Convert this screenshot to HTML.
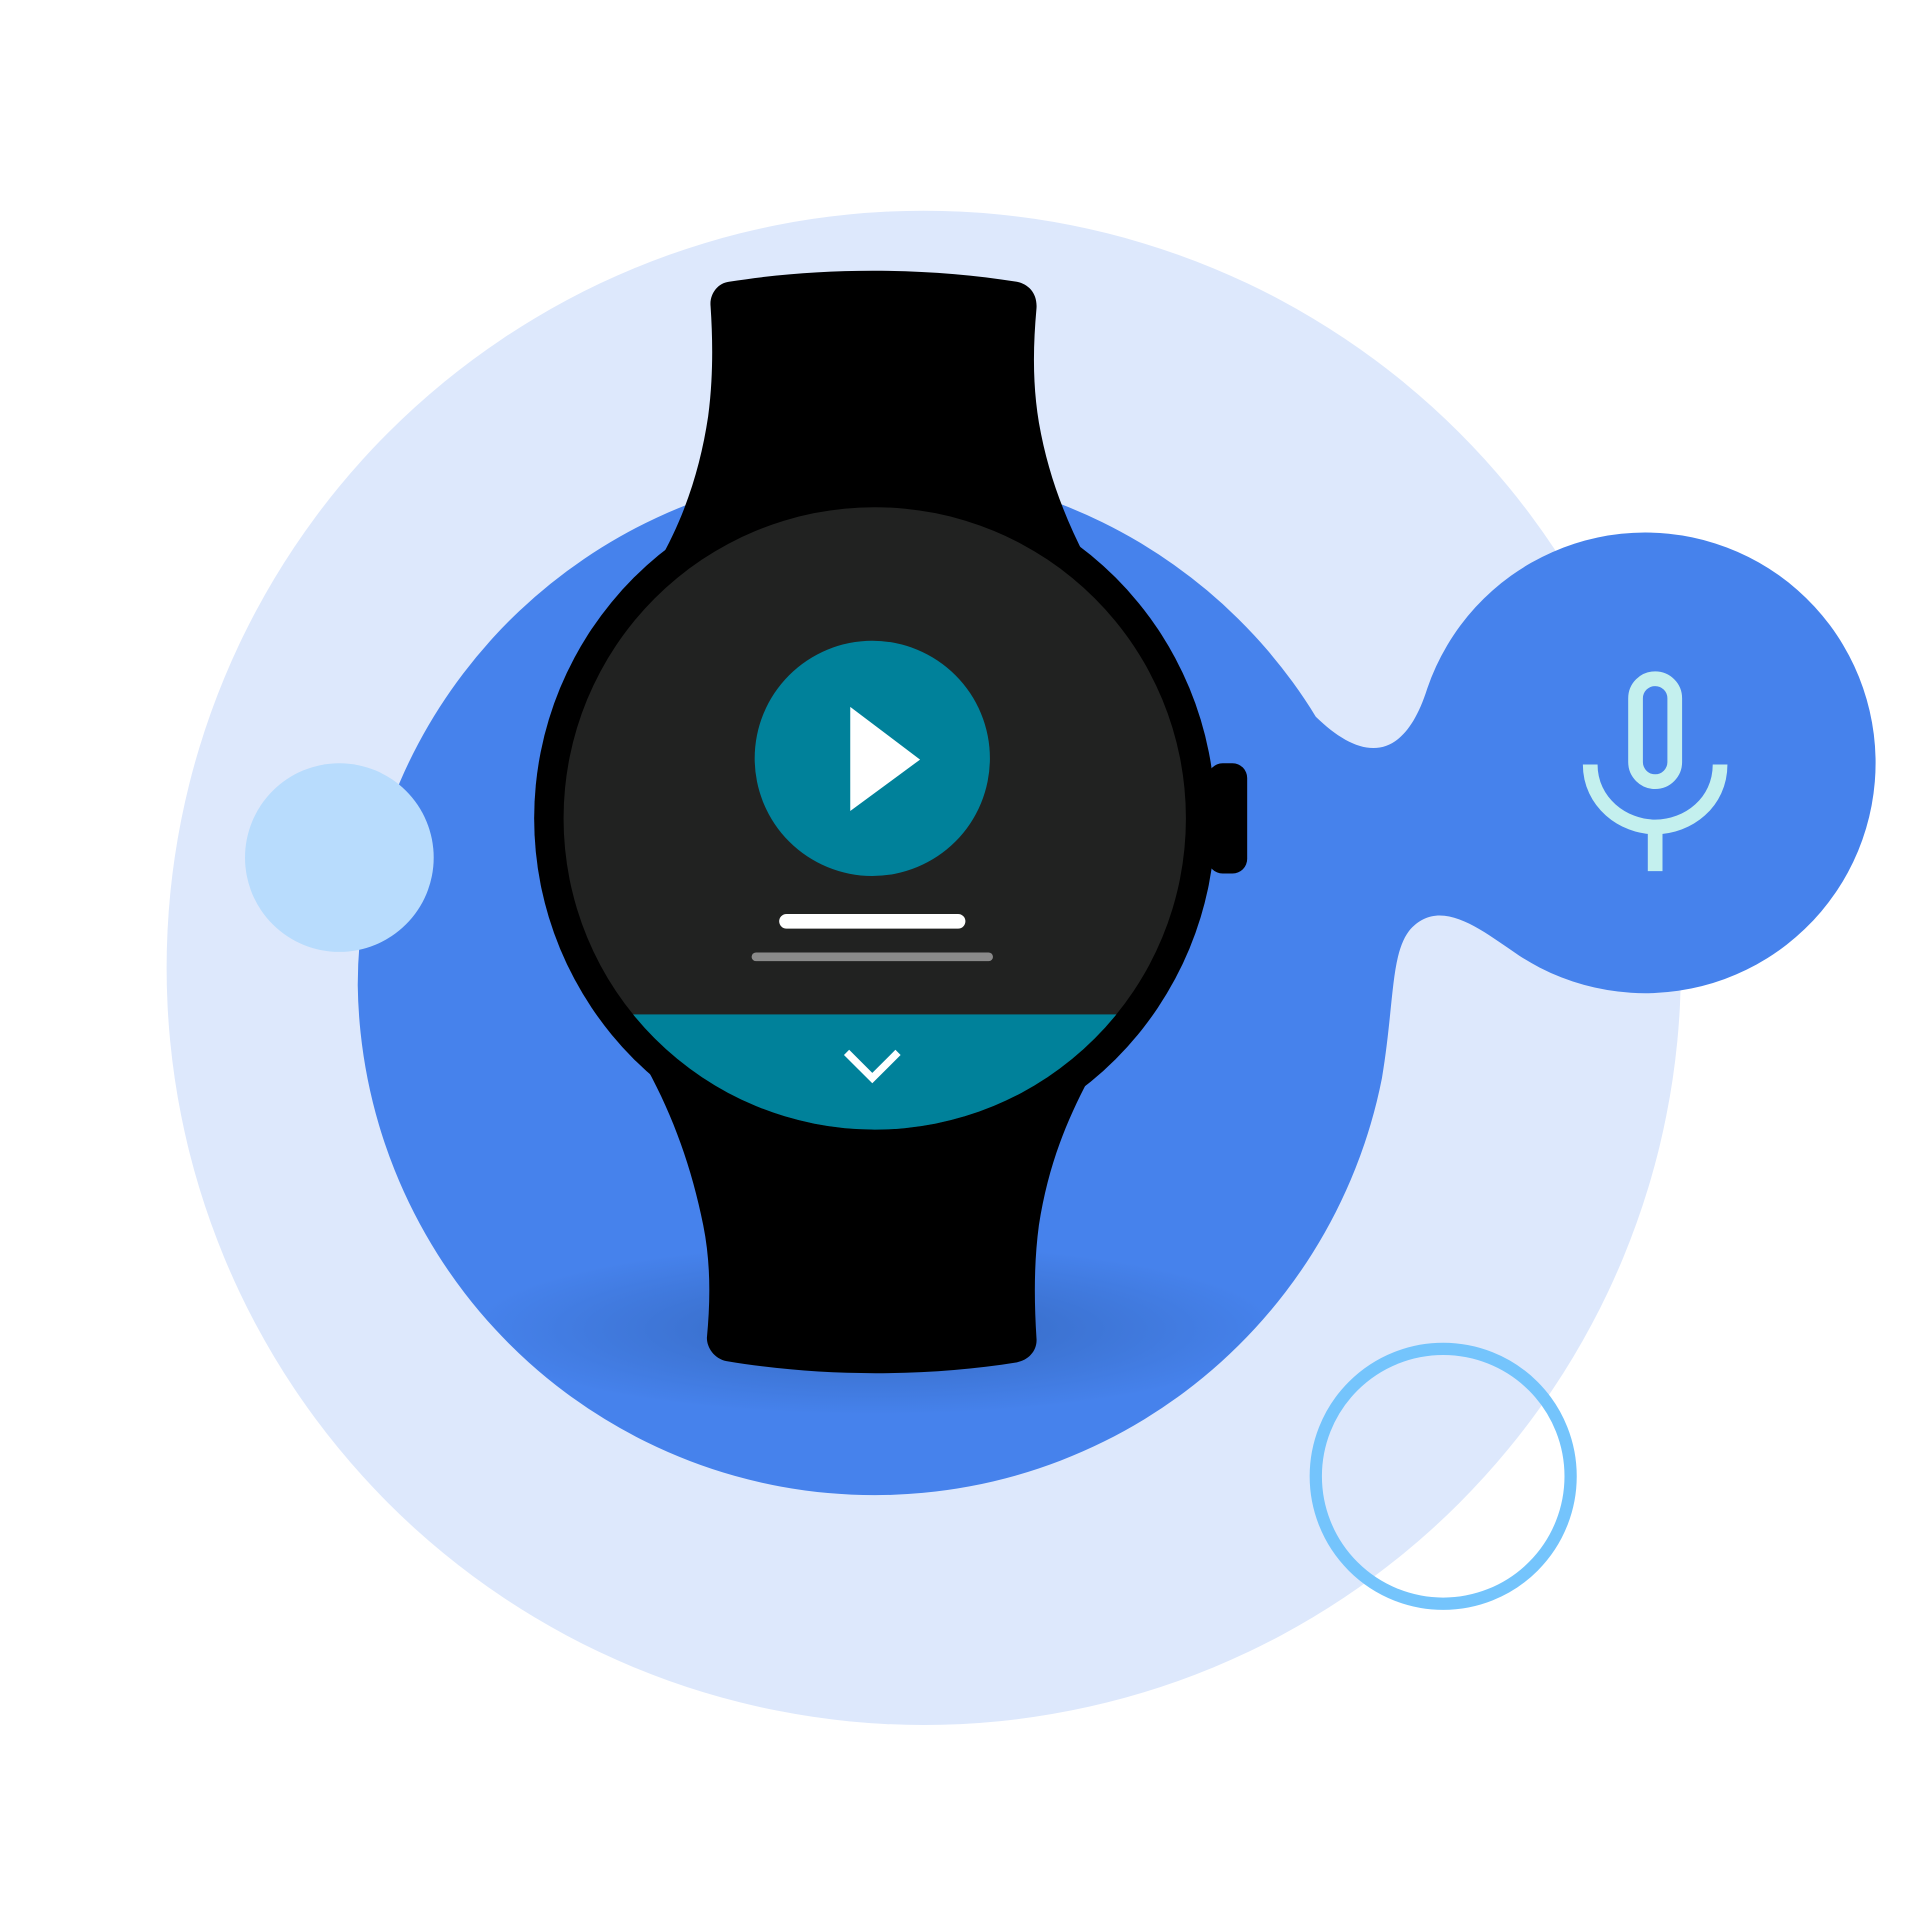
<!DOCTYPE html>
<html><head><meta charset="utf-8"><style>html,body{margin:0;padding:0;background:#fff}svg{display:block}</style></head>
<body>
<svg width="1921" height="1921" viewBox="0 0 1568 1568" xmlns="http://www.w3.org/2000/svg">
<defs>
<radialGradient id="sh" cx="0.5" cy="0.5" r="0.5">
<stop offset="0" stop-color="#2f5fb0" stop-opacity="0.75"/>
<stop offset="1" stop-color="#2f5fb0" stop-opacity="0"/>
</radialGradient>
<clipPath id="scr"><circle cx="714" cy="668" r="254"/></clipPath>
<clipPath id="blob"><path d="M292,804 A422,422 0 0 1 1074,585 C1110,620 1145,625 1165,562 A188,188 0 1 1 1240,780 C1210,760 1175,730 1150,760 C1135,780 1138,820 1128,880 A422,422 0 0 1 292,804 Z"/></clipPath>
</defs>
<circle cx="754" cy="790" r="618" fill="#dde8fc"/>
<path d="M292,804 A422,422 0 0 1 1074,585 C1110,620 1145,625 1165,562 A188,188 0 1 1 1240,780 C1210,760 1175,730 1150,760 C1135,780 1138,820 1128,880 A422,422 0 0 1 292,804 Z" fill="#4682ec"/>
<ellipse cx="714" cy="1085" rx="330" ry="70" fill="url(#sh)" clip-path="url(#blob)"/>
<circle cx="277" cy="700" r="77" fill="#b8dcfd"/>
<circle cx="1178" cy="1205" r="104" fill="none" stroke="#74c4fc" stroke-width="10"/>
<!-- bands -->
<path d="M537,460 C560,420 572,380 578,340 C582,310 582,280 580,250 C579,240 586,231 595,230 C670,218 755,218 830,230 C840,232 847,240 846,252 C843,285 843,315 848,345 C855,385 868,420 886,455 Z" fill="#000"/>
<path d="M528,872 C550,912 565,955 574,1000 C580,1030 580,1060 577,1092 C577,1100 583,1109 593,1111 C670,1124 755,1124 830,1112 C840,1110 847,1102 846,1092 C844,1060 844,1030 848,1000 C855,955 868,920 889,880 Z" fill="#000"/>
<rect x="986" y="623" width="32" height="90" rx="12" fill="#000"/>
<circle cx="714" cy="668" r="278" fill="#000"/>
<g clip-path="url(#scr)">
<rect x="400" y="400" width="640" height="600" fill="#212221"/>
<rect x="400" y="828" width="640" height="200" fill="#00819a"/>
</g>
<circle cx="712" cy="619" r="96" fill="#00819a"/>
<path d="M694,577 L751,620 L694,662 Z" fill="#fff"/>
<line x1="642" y1="752" x2="782" y2="752" stroke="#fff" stroke-width="12" stroke-linecap="round"/>
<line x1="617" y1="781" x2="807" y2="781" stroke="#8a8a8a" stroke-width="7" stroke-linecap="round"/>
<path d="M691,859 L712,880 L733,859" fill="none" stroke="#fff" stroke-width="6"/>
<!-- mic -->
<g fill="none" stroke="#c4f0ee" stroke-width="12">
<rect x="1335" y="554" width="32" height="84" rx="16"/>
<path d="M1298,624 C1298,655 1325,675 1351,675 C1378,675 1404,655 1404,624"/>
<line x1="1351" y1="675" x2="1351" y2="711"/>
</g>
</svg>
</body></html>
